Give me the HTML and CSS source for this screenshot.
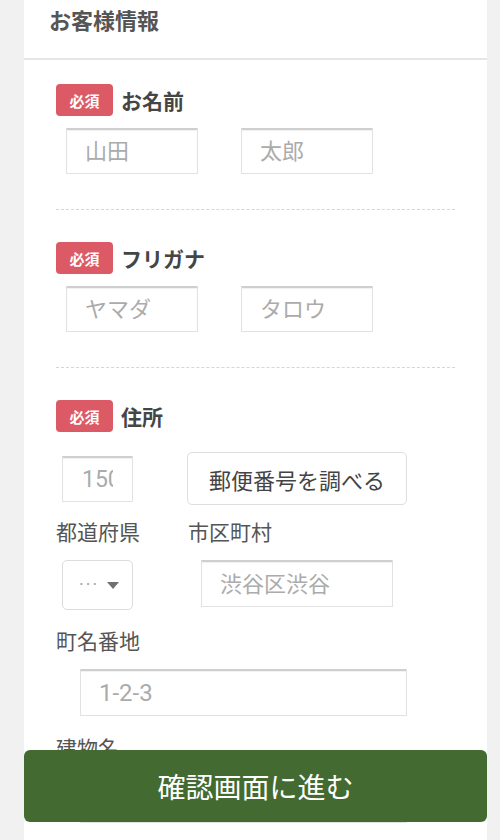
FILE: index.html
```html
<!DOCTYPE html>
<html lang="ja">
<head>
<meta charset="utf-8">
<title>お客様情報</title>
<link rel="stylesheet" href="styles.css">
</head>
<body>
<div class="card">
  <div class="card-head">お客様情報</div>

  <div class="field field-first">
    <div class="label-row"><span class="badge">必須</span><span class="label">お名前</span></div>
    <div class="pair">
      <input class="text short" type="text" placeholder="山田">
      <input class="text short" type="text" placeholder="太郎">
    </div>
  </div>

  <div class="field">
    <div class="label-row"><span class="badge">必須</span><span class="label">フリガナ</span></div>
    <div class="pair">
      <input class="text short" type="text" placeholder="ヤマダ">
      <input class="text short" type="text" placeholder="タロウ">
    </div>
  </div>

  <div class="field field-last">
    <div class="label-row"><span class="badge">必須</span><span class="label">住所</span></div>
    <div class="zip-row">
      <input class="text zip" type="text" placeholder="1500001">
      <button class="lookup" type="button">郵便番号を調べる</button>
    </div>
    <div class="cols">
      <div class="col col-pref">
        <div class="sub">都道府県</div>
        <div class="select">
          <span class="dots">···</span>
          <svg class="caret" width="12" height="7" viewBox="0 0 12 7"><path d="M0 0h12L6 7z" fill="#707070"/></svg>
        </div>
      </div>
      <div class="col col-city">
        <div class="sub">市区町村</div>
        <input class="text city" type="text" placeholder="渋谷区渋谷">
      </div>
    </div>
    <div class="sub sub-block">町名番地</div>
    <input class="text wide latin" type="text" placeholder="1-2-3">
    <div class="sub sub-block2">建物名</div>
    <input class="text wide" type="text" placeholder="">
  </div>
</div>

<button class="submit" type="button">確認画面に進む</button>
</body>
</html>
```

FILE: styles.css
```css
* { box-sizing: border-box; }

html, body {
  margin: 0;
  padding: 0;
  background: #f1f1f1;
  font-family: Roboto, "Noto Sans CJK JP", sans-serif;
  color: #444;
}

.card {
  width: 463px;
  margin-left: 24px;
  background: #fff;
  min-height: 900px;
}

.card-head {
  height: 60px;
  padding: 6px 0 0 25px;
  line-height: 32px;
  font-size: 22px;
  font-weight: bold;
  color: #555;
  border-bottom: 2px solid #e6e6e6;
}

.field {
  margin: 0 32px;
  padding: 32px 0 35px;
  border-bottom: 1px dashed #d6d6d6;
}

.field-first { padding-top: 24px; }

.field-last { border-bottom: none; }

.label-row {
  display: flex;
  align-items: center;
  height: 32px;
}

.badge {
  display: inline-flex;
  align-items: center;
  justify-content: center;
  width: 57px;
  height: 32px;
  border-radius: 4px;
  background: #dc5a65;
  color: #fff;
  font-size: 15px;
  font-weight: bold;
}

.label {
  margin-left: 8px;
  font-size: 21px;
  font-weight: bold;
  color: #454545;
}

.text {
  display: block;
  height: 46px;
  border: 1px solid #e2e2e2;
  border-top: 2px solid #cfcfcf;
  box-shadow: inset 0 1px 1px rgba(0,0,0,0.06);
  border-radius: 1px;
  background: #fff;
  font-family: inherit;
  font-size: 22px;
  padding: 0 18px;
  color: #444;
  outline: none;
}

.text::placeholder { color: #ababab; }

.pair {
  display: flex;
  gap: 43px;
  margin-top: 12px;
  padding-left: 10px;
}

.short { width: 132px; }

.zip-row {
  display: flex;
  align-items: center;
  margin-top: 20px;
  padding-left: 6px;
}

.zip {
  width: 71px;
  padding: 0 19px 0 19px;
  font-size: 23px;
}

.lookup {
  margin-left: 54px;
  width: 220px;
  height: 53px;
  border: 1px solid #dedede;
  border-radius: 5px;
  background: #fff;
  font-family: inherit;
  font-size: 22px;
  color: #444;
  padding: 0;
}

.cols {
  display: flex;
  margin-top: 13px;
}

.col-pref { width: 132px; }

.sub {
  font-size: 21px;
  line-height: 30px;
  color: #555;
}

.select {
  display: flex;
  align-items: center;
  margin: 12px 0 0 6px;
  width: 71px;
  height: 50px;
  border: 1px solid #dcdcdc;
  border-radius: 5px;
  padding-left: 16px;
}

.dots {
  font-size: 18px;
  color: #a5a5a5;
  letter-spacing: 2px;
  line-height: 1;
}

.caret { margin-left: 8px; }

.city {
  margin: 12px 0 0 13px;
  width: 192px;
  height: 47px;
}

.sub-block { margin-top: 17px; }

.wide {
  margin: 12px 0 0 24px;
  width: 327px;
  height: 47px;
}

.latin { font-size: 24px; }

.sub-block2 { margin-top: 18px; }

.submit {
  position: fixed;
  left: 24px;
  bottom: 18px;
  width: 463px;
  height: 72px;
  border: none;
  border-radius: 6px;
  background: #426a31;
  color: #fff;
  font-family: Roboto, "Noto Sans CJK JP", sans-serif;
  font-size: 28px;
  padding: 0;
}
```
